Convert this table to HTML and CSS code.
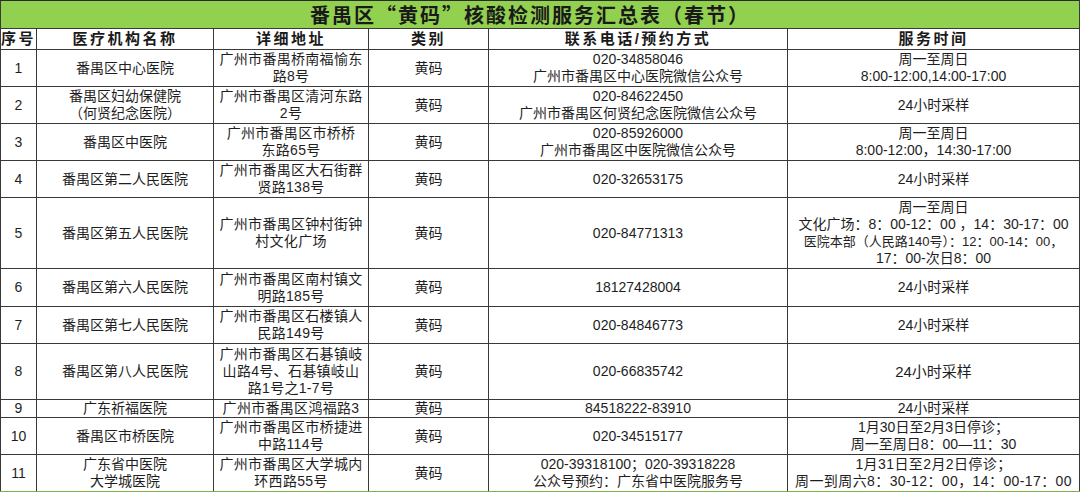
FILE: index.html
```html
<!DOCTYPE html>
<html lang="zh-CN">
<head>
<meta charset="utf-8">
<title>番禺区“黄码”核酸检测服务汇总表（春节）</title>
<link rel="stylesheet" href="styles.css">
</head>
<body>
<table class="sheet">
  <colgroup>
    <col class="c-no"><col class="c-name"><col class="c-addr"><col class="c-type"><col class="c-tel"><col class="c-time">
  </colgroup>
  <tr class="r-title"><td colspan="6" class="title">番禺区“黄码”核酸检测服务汇总表（春节）</td></tr>
  <tr class="r-head">
    <td class="hd">序号</td><td class="hd">医疗机构名称</td><td class="hd">详细地址</td><td class="hd">类别</td><td class="hd">联系电话/预约方式</td><td class="hd">服务时间</td>
  </tr>
  <tr class="r37">
    <td>1</td><td>番禺区中心医院</td><td class="addr">广州市番禺桥南福愉东<br>路8号</td><td>黄码</td><td>020-34858046<br>广州市番禺区中心医院微信公众号</td><td>周一至周日<br>8:00-12:00,14:00-17:00</td>
  </tr>
  <tr class="r37">
    <td>2</td><td>番禺区妇幼保健院<br>（何贤纪念医院）</td><td class="addr">广州市番禺区清河东路<br>2号</td><td>黄码</td><td>020-84622450<br>广州市番禺区何贤纪念医院微信公众号</td><td>24小时采样</td>
  </tr>
  <tr class="r37">
    <td>3</td><td>番禺区中医院</td><td class="addr">广州市番禺区市桥桥<br>东路65号</td><td>黄码</td><td>020-85926000<br>广州市番禺区中医院微信公众号</td><td>周一至周日<br>8:00-12:00，14:30-17:00</td>
  </tr>
  <tr class="r37">
    <td>4</td><td>番禺区第二人民医院</td><td class="addr">广州市番禺区大石街群<br>贤路138号</td><td>黄码</td><td>020-32653175</td><td>24小时采样</td>
  </tr>
  <tr class="r71">
    <td>5</td><td>番禺区第五人民医院</td><td class="addr">广州市番禺区钟村街钟<br>村文化广场</td><td>黄码</td><td>020-84771313</td><td class="small">周一至周日<br>文化广场：8：00-12：00 ，14：30-17：00<br><span class="tiny">医院本部（人民路140号）：12：00-14：00，</span><br>17：00-次日8：00</td>
  </tr>
  <tr class="r38">
    <td>6</td><td>番禺区第六人民医院</td><td class="addr">广州市番禺区南村镇文<br>明路185号</td><td>黄码</td><td>18127428004</td><td>24小时采样</td>
  </tr>
  <tr class="r37">
    <td>7</td><td>番禺区第七人民医院</td><td class="addr">广州市番禺区石楼镇人<br>民路149号</td><td>黄码</td><td>020-84846773</td><td>24小时采样</td>
  </tr>
  <tr class="r56">
    <td>8</td><td>番禺区第八人民医院</td><td class="addr">广州市番禺区石碁镇岐<br>山路4号、石碁镇岐山<br>路1号之1-7号</td><td>黄码</td><td>020-66835742</td><td class="big">24小时采样</td>
  </tr>
  <tr class="r17">
    <td>9</td><td>广东祈福医院</td><td class="addr">广州市番禺区鸿福路3</td><td>黄码</td><td>84518222-83910</td><td>24小时采样</td>
  </tr>
  <tr class="r37">
    <td>10</td><td>番禺区市桥医院</td><td class="addr">广州市番禺区市桥捷进<br>中路114号</td><td>黄码</td><td>020-34515177</td><td>1月30日至2月3日停诊；<br>周一至周日8：00—11：30</td>
  </tr>
  <tr class="r37 last">
    <td>11</td><td>广东省中医院<br>大学城医院</td><td class="addr">广州市番禺区大学城内<br>环西路55号</td><td>黄码</td><td>020-39318100；020-39318228<br>公众号预约：广东省中医院服务号</td><td class="wide">1月31日至2月2日停诊；<br>周一到周六8：30-12：00，14：00-17：00</td>
  </tr>
</table>
</body>
</html>
```

FILE: styles.css
```css
html, body {
  margin: 0;
  padding: 0;
  background: #ffffff;
}

.sheet {
  border-collapse: collapse;
  table-layout: fixed;
  width: 1079px;
  font-family: "Liberation Sans", "Noto Sans CJK SC", sans-serif;
  font-size: 14px;
  color: #1e1e1e;
  border-bottom: 2px solid #7fb04a;
}

.c-no { width: 36px; }
.c-name { width: 177px; }
.c-addr { width: 155px; }
.c-type { width: 120px; }
.c-tel { width: 299px; }
.c-time { width: 292px; }

.sheet td {
  border: 1px solid #3a3a3a;
  text-align: center;
  vertical-align: middle;
  padding: 0;
  line-height: 17px;
  white-space: nowrap;
  overflow: hidden;
}

.sheet td.title {
  background: #92d050;
  font-family: "Noto Sans CJK SC", sans-serif;
  font-size: 20px;
  font-weight: bold;
  letter-spacing: 2px;
  color: #1a1a1a;
  height: 27px;
  line-height: 27px;
  border-top: 1px solid #2a2a2a;
  padding-right: 20px;
}

.sheet td.hd {
  font-size: 15px;
  font-weight: bold;
  letter-spacing: 2.5px;
  height: 20px;
  line-height: 20px;
  color: #1a1a1a;
}

.r17 td { height: 16px; }
.r37 td { height: 36px; }
.r38 td { height: 37px; }
.r56 td { height: 55px; }
.r71 td { height: 70px; }

.sheet td.addr {
  letter-spacing: 0.3px;
}

.sheet td.small {
  font-size: 14px;
}

.tiny {
  font-size: 13px;
}

.sheet td.big {
  font-size: 15px;
}

.sheet td.wide {
  letter-spacing: 0.4px;
}
```
